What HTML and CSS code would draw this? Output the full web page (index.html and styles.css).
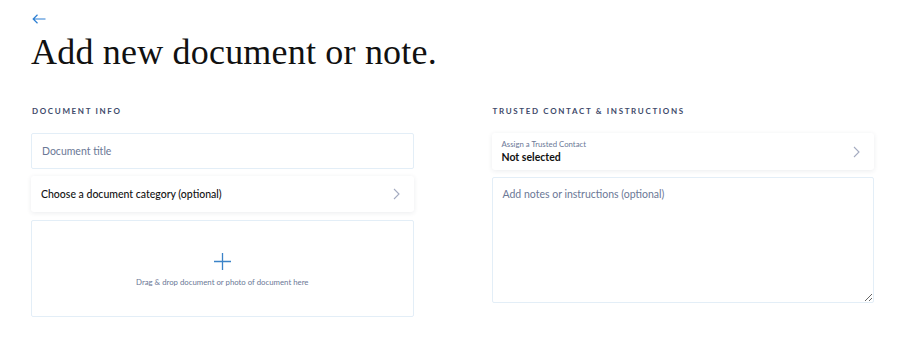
FILE: index.html
```html
<!DOCTYPE html>
<html>
<head>
<meta charset="utf-8">
<link rel="stylesheet" href="styles.css">
</head>
<body>
<div class="page">
  <a class="back" href="#">
    <svg width="14" height="10" viewBox="0 0 14 10"><path d="M13.5 5H1M5.5 0.8L1.2 5L5.5 9.2" fill="none" stroke="#2d7fd3" stroke-width="1.2"/></svg>
  </a>
  <h1 class="title">Add new document or note.</h1>
  <div class="columns">
    <section class="col">
      <h2 class="label">Document info</h2>
      <input class="field" type="text" placeholder="Document title">
      <div class="card select">
        <span class="select-text">Choose a document category (optional)</span>
        <svg class="chev" width="7" height="12" viewBox="0 0 7 12"><path d="M1 1L6 6L1 11" fill="none" stroke="#a4abc0" stroke-width="1.1"/></svg>
      </div>
      <div class="drop">
        <svg width="17" height="17" viewBox="0 0 17 17"><path d="M8.5 0V17M0 8.5H17" stroke="#3b83c8" stroke-width="1.3"/></svg>
        <span class="drop-text">Drag &amp; drop document or photo of document here</span>
      </div>
    </section>
    <section class="col">
      <h2 class="label">Trusted contact &amp; instructions</h2>
      <div class="card contact">
        <div class="contact-text">
          <span class="small">Assign a Trusted Contact</span>
          <span class="value">Not selected</span>
        </div>
        <svg class="chev" width="7" height="12" viewBox="0 0 7 12"><path d="M1 1L6 6L1 11" fill="none" stroke="#a4abc0" stroke-width="1.1"/></svg>
      </div>
      <textarea class="notes" placeholder="Add notes or instructions (optional)"></textarea>
    </section>
  </div>
</div>
</body>
</html>
```
FILE: styles.css
```css
* { box-sizing: border-box; }
body { margin: 0; background: #fff; font-family: Lato, "Noto Sans", sans-serif; }
.page { padding: 14px 26px 0 31px; }
.back { display: block; width: 14px; height: 12px; margin-left: 1px; }
.back svg { display: block; }
.title {
  font-family: "Liberation Serif", "DejaVu Serif", serif;
  font-weight: 400;
  font-size: 36px;
  color: #111;
  margin: 4px 0 0 0;
  line-height: 44px;
  letter-spacing: 0.2px;
}
.columns { display: grid; grid-template-columns: 1fr 1fr; column-gap: 78px; margin-top: 32px; }
.col { display: flex; flex-direction: column; gap: 7px; }
.label {
  margin: 0 0 10px 1px;
  font-size: 8px;
  font-weight: 700;
  letter-spacing: 1.65px;
  text-transform: uppercase;
  color: #3e4a6a;
  line-height: 10px;
}
.field {
  height: 36px;
  border: 1px solid #e3eef7;
  border-radius: 2px;
  padding: 0 10px;
  font-family: Lato, sans-serif;
  font-size: 10.5px;
  outline: none;
}
.field::placeholder, .notes::placeholder { color: #6b7896; }
.card {
  background: #fff;
  border-radius: 3px;
  box-shadow: 0 1px 5px rgba(30, 40, 70, 0.09);
  display: flex;
  align-items: center;
  justify-content: space-between;
  padding: 0 14px 0 10px;
}
.select { height: 36px; }
.select-text { font-size: 10.5px; font-weight: 500; color: #111; }
.drop {
  height: 97px;
  margin-top: 1px;
  border: 1px solid #e3eef7;
  border-radius: 2px;
  display: flex;
  flex-direction: column;
  align-items: center;
  justify-content: center;
  gap: 7px;
  padding-top: 2px;
}
.drop svg { display: block; }
.drop-text { font-size: 7.8px; color: #6b7896; }
.contact { height: 37px; }
.contact-text { display: flex; flex-direction: column; gap: 2px; }
.small { font-size: 7.8px; color: #6b7896; line-height: 10px; }
.value { font-size: 10.5px; font-weight: 700; color: #111; line-height: 13px; }
.notes {
  height: 126px;
  border: 1px solid #e3eef7;
  border-radius: 2px;
  padding: 10px 10px;
  font-family: Lato, sans-serif;
  font-size: 10.5px;
  outline: none;
  resize: vertical;
}
```
